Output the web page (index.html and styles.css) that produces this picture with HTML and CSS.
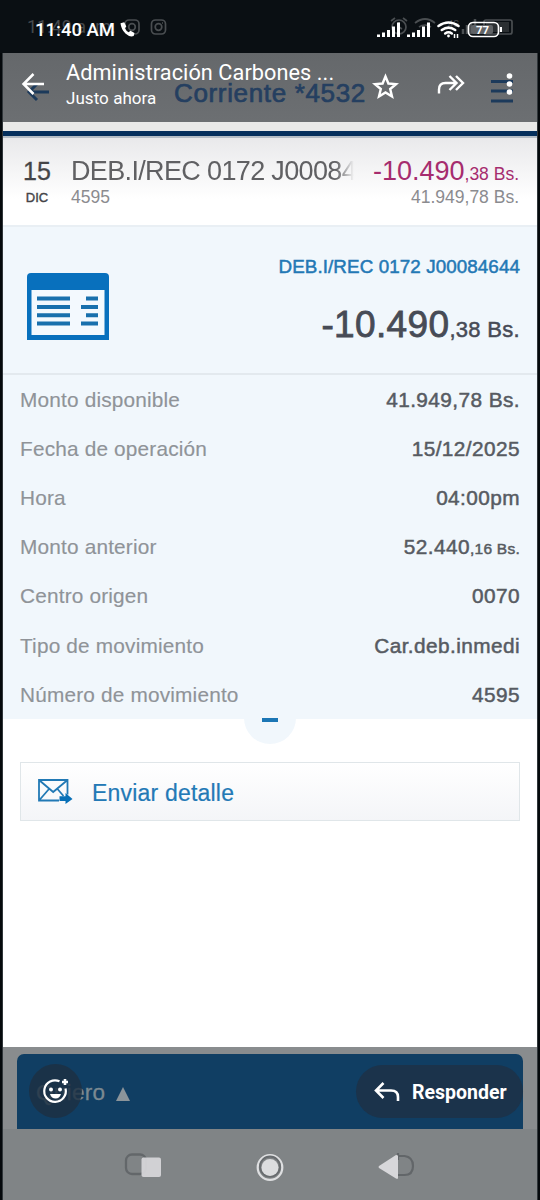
FILE: index.html
```
<!DOCTYPE html>
<html lang="es">
<head>
<meta charset="utf-8">
<title>Detalle de movimiento</title>
<link rel="stylesheet" href="styles.css">
</head>
<body>
<div class="phone">
  <header class="status">
    <svg class="status-ghost" width="540" height="53" viewBox="0 0 540 53" fill="none" stroke="#4a4e51" stroke-width="1.7">
      <text x="27" y="33" class="ghost-time">11:49 a. m.</text>
      <rect x="125" y="20" width="14" height="14" rx="4"/><circle cx="132" cy="27" r="3.3"/>
      <rect x="151.500" y="20" width="14" height="14" rx="4"/><circle cx="158.500" cy="27" r="3.3"/><path d="M162 23h1"/>
      <circle cx="399" cy="27" r="7"/><path d="M399 22v5l3 2M391 21l4-3M403 18l4 3M415 23q10-8 20 0M419 27q6-4 12 0"/>
      <text x="448" y="27" class="ghost-4g">4G</text>
      <path d="M463 34v-5M467 34v-9M471 34v-12M475 34v-15" stroke-width="2.500"/>
      <rect x="484" y="20" width="28" height="14" rx="2"/><rect x="486" y="22" width="23" height="10" fill="#2b2f32" stroke="none"/>
    </svg>
    <div class="clock">11:40 AM</div>
    <svg class="call" width="15" height="15" viewBox="0 0 15 15"><path fill="#fff" d="M.5 1.200 4.200.2 6.300 4.500 4.800 6.200q1.300 2.500 3.800 4l1.900-1.500 4 2.300-.8 3q-3.900 1.500-8.200-2.500T.5 1.200z"/></svg>
    <svg class="radios" width="130" height="24" viewBox="375 18 130 24" fill="none" stroke="#fff">
      <path stroke-width="3" d="M378.500 37v-2.500M383.500 37v-4.500M388.500 37v-7M393.500 37v-10.500M398.500 37v-14.500M408.500 37v-2.500M413.500 37v-4.500M418.500 37v-7M423.500 37v-10.500M428.500 37v-14.500"/>
      <path stroke-width="2.500" stroke-linecap="round" d="M438.500 26q10-7 20 0M441.800 30q6.700-4.700 13.400 0M445.200 33.500q3.300-2.400 6.600 0"/>
      <circle cx="448.500" cy="36" r="1.400" fill="#fff" stroke="none"/><path stroke-width="1.500" d="M454.500 34v4M457.500 34v4"/>
      <rect x="468.500" y="22.500" width="30" height="14" rx="4.500" stroke-width="1.700"/><rect x="471" y="25" width="22" height="9" rx="2" fill="#606366" stroke="none"/><path stroke-width="2" d="M501 27v5"/>
      <text x="476" y="34" class="battery">77</text>
    </svg>
  </header>

  <main class="screen">
    <div class="topbar">
      <div class="account">Corriente *4532</div>
      <svg class="ghost-nav" width="534" height="69" viewBox="3 53 534 69" fill="none" stroke="#1c3a5b" stroke-width="3"><path d="M37 84l-8 8 8 8M29 92h20M491 81.500h22M491 91h22M491 101h22"/></svg>
      <div class="viewer">
        <svg class="back" width="24" height="24" viewBox="0 0 24 24" fill="none" stroke="#fff" stroke-width="2.500"><path d="M12.500 2 2.500 12l10 10M3 12h20"/></svg>
        <div class="contact"><div class="name">Administración Carbones ...</div><div class="when">Justo ahora</div></div>
        <svg class="tools" width="145" height="30" viewBox="371 70 145 30" fill="none" stroke="#fff" stroke-width="2.400">
          <path d="M385.500 76.500l2.900 7 7.600.6-5.800 4.900 1.800 7.400-6.500-4-6.500 4 1.800-7.400-5.800-4.900 7.600-.6z"/>
          <path d="M439 93.500v-4q0-6.500 6.500-6.500H455M449.500 76l7 7-7 7M456 76l7 7-7 7"/>
          <g fill="#fff" stroke="none"><circle cx="509.500" cy="76" r="2.800"/><circle cx="509.500" cy="84" r="2.800"/><circle cx="509.500" cy="92" r="2.800"/></g>
        </svg>
      </div>
    </div>
    <div class="rule"></div>

    <section class="movement">
      <div class="date"><div class="day">15</div><div class="month">DIC</div></div>
      <div class="concept"><div class="concept-name">DEB.I/REC 0172 J00084</div><div class="ref">4595</div></div>
      <div class="sums"><div class="debit">-10.490<small>,38 Bs.</small></div><div class="balance">41.949,78 Bs.</div></div>
    </section>

    <section class="detail">
      <div class="summary">
        <svg width="83" height="67" viewBox="0 0 83 67"><path fill="#0870bd" d="M0 67V4q0-4 4-4h74q4 0 4 4v63z"/><path fill="#f3f9fe" d="M4.500 17h73v45h-73z"/><path fill="none" stroke="#1870ad" stroke-width="4" d="M10 25.500h33M10 34h33M10 42.200h33M10 50.500h33M59 25.500h12M54 34h17M59 42.200h12M54 50.500h17"/></svg>
        <div class="summary-text"><div class="title">DEB.I/REC 0172 J00084644</div><div class="amount">-10.490<small>,38 Bs.</small></div></div>
      </div>
      <dl class="facts">
        <div class="fact"><dt>Monto disponible</dt><dd>41.949,78 Bs.</dd></div>
        <div class="fact"><dt>Fecha de operación</dt><dd>15/12/2025</dd></div>
        <div class="fact"><dt>Hora</dt><dd>04:00pm</dd></div>
        <div class="fact"><dt>Monto anterior</dt><dd>52.440<small>,16 Bs.</small></dd></div>
        <div class="fact"><dt>Centro origen</dt><dd>0070</dd></div>
        <div class="fact"><dt>Tipo de movimiento</dt><dd>Car.deb.inmedi</dd></div>
        <div class="fact"><dt>Número de movimiento</dt><dd>4595</dd></div>
      </dl>
      <div class="collapse"></div>
    </section>

    <div class="send">
      <svg width="36" height="26" viewBox="0 0 36 26" fill="none" stroke="#2179b5" stroke-width="1.800"><path d="M21 21.500H1V1h28.500v14.500M1 1l14.200 12L29.500 1M1 21.500 11 10M19.500 10l6 7"/><path fill="#0870b7" stroke="none" d="M21.500 17.200h6v-3.200l7 6-7 5v-3h-6z"/></svg>
      <span>Enviar detalle</span>
    </div>

    <footer class="bottom">
      <div class="want">
        <span class="want-label">Quiero</span><span class="triangle"></span>
        <div class="react"><svg width="30" height="30" viewBox="40 1075 30 30" fill="none" stroke="#fff" stroke-width="2.200"><path d="M59.500 1080.300a10.800 10.800 0 1 0 6 7.200"/><path d="M65 1078v6M62 1081h6" stroke-width="2.600"/><path d="M50 1093h11q-1.500 4.500-5.500 4.500t-5.500-4.500z" fill="#fff" stroke="none"/><circle cx="51" cy="1088.500" r="2" fill="#fff" stroke="none"/><circle cx="60" cy="1088.500" r="2" fill="#fff" stroke="none"/></svg></div>
        <div class="reply"><svg width="26" height="22" viewBox="0 0 26 22" fill="none" stroke="#fff" stroke-width="2.600"><path d="M9.500 2 2 9.500l7.500 7.500M2.500 9.500H17q7 0 7 6.500v4"/></svg><span>Responder</span></div>
      </div>
      <svg class="keys" width="534" height="71" viewBox="3 1129 534 71" fill="none">
        <rect x="126" y="1154.500" width="20" height="19.500" rx="6" stroke="#63676a" stroke-width="2.300"/><rect x="141.500" y="1157.500" width="19.500" height="19.500" rx="2" fill="#d7d7da" fill-opacity=".93"/>
        <circle cx="270" cy="1167.500" r="12.300" stroke="#dedfe1" stroke-width="2.200"/><circle cx="270" cy="1166.500" r="10" stroke="#686c6f" stroke-width="1.800"/><circle cx="270" cy="1167.500" r="8.500" fill="#dcdddf"/>
        <path d="M397 1156h7.500q8.500 1 8.500 10t-8.500 9H397M398 1153v7" stroke="#626669" stroke-width="2.200"/><path d="M398 1156v22.500q-1 .5-2 0l-17-10.500q-1-1 0-2l17-11q2 0 2 1z" fill="#d7d7da"/>
      </svg>
    </footer>
  </main>
</div>
</body>
</html>
```
FILE: styles.css
```
* { box-sizing: border-box; }
body { margin: 0; background: #05090c; font-family: "Liberation Sans", Arial, sans-serif; white-space: nowrap; }
.phone { width: 540px; height: 1200px; display: flex; flex-direction: column; overflow: hidden; }

.status { height: 53px; position: relative; display: flex; align-items: flex-start; padding: 18px 35px 0 35px; background: #0a0f13; color: #fff; font-family: Roboto, sans-serif; }
.status-ghost { position: absolute; left: 0; top: 0; }
.ghost-time { font-size: 18px; fill: #45494c; stroke: none; }
.ghost-4g { font-size: 9px; fill: #45494c; stroke: none; }
.clock { position: relative; font-size: 18.500px; line-height: 24px; font-weight: 500; }
.call { position: relative; margin: 4px 0 0 5px; }
.radios { position: relative; margin-left: auto; }
.battery { font: 700 11.500px Roboto, sans-serif; fill: #fff; stroke: none; }

.screen { margin: 0 3px; height: 1147px; display: flex; flex-direction: column; background: #fff; box-shadow: 0 0 0 1px #30363a; clip-path: inset(0 -1px); }
.topbar { height: 69px; position: relative; background: linear-gradient(#65686b, #6c6f72); }
.account { position: absolute; left: 171px; top: 25px; font-size: 26px; line-height: 30px; letter-spacing: .65px; color: #253f60; -webkit-text-stroke: .7px #253f60; }
.ghost-nav { position: absolute; left: 0; top: 0; }
.viewer { position: relative; height: 69px; display: flex; color: #fff; font-family: Roboto, sans-serif; }
.back { margin: 19px 0 0 18px; }
.contact { margin: 7px 0 0 21px; }
.name { font-size: 21.700px; line-height: 26px; letter-spacing: .07px; }
.when { font-size: 17px; line-height: 24px; letter-spacing: .05px; }
.tools { margin: 17px 21px 0 auto; }
.rule { height: 16px; border-top: 9px solid #e9e9e8; border-bottom: 2px solid #b5bdc5; background: #06305d; }

.movement { height: 87px; display: flex; padding: 19px 18px 0 16px; background: linear-gradient(#e9e9eb, #fff 70%); }
.date { width: 36px; text-align: center; color: #444447; }
.day { font-size: 25px; line-height: 28px; -webkit-text-stroke: .3px; }
.month { font-size: 13px; line-height: 26px; -webkit-text-stroke: .4px; }
.concept { width: 283px; margin-left: 16px; }
.concept-name { font-size: 27px; line-height: 28px; letter-spacing: -.65px; color: #606063; -webkit-mask-image: linear-gradient(90deg, #000 265px, transparent 283px); mask-image: linear-gradient(90deg, #000 265px, transparent 283px); }
.ref, .balance { font-size: 17.500px; line-height: 24px; color: #8b8b8f; }
.sums { margin-left: auto; text-align: right; }
.debit { height: 28px; font-size: 27px; line-height: 28px; color: #a62c6e; }
.debit small { font-size: 17.500px; line-height: 1; }

.detail { height: 494px; position: relative; background: #f1f7fc; border-top: 2px solid #e9eff4; }
.summary { height: 148px; display: flex; justify-content: space-between; padding: 46px 17px 0 24px; border-bottom: 2px solid #e3e9ee; }
.summary-text { margin-top: -18px; text-align: right; }
.title { font-size: 18.800px; line-height: 24px; letter-spacing: .1px; color: #2378b5; -webkit-text-stroke: .5px; }
.amount { margin-top: 24px; font-size: 37px; line-height: 44px; letter-spacing: .35px; color: #474b56; -webkit-text-stroke: .8px; }
.amount small { font-size: 22px; letter-spacing: .3px; -webkit-text-stroke: .5px; }
.facts { margin: 0; padding: 0 17px; }
.fact { height: 49.200px; display: flex; align-items: center; justify-content: space-between; font-size: 20.800px; }
.fact dt { color: #8f9398; letter-spacing: .18px; -webkit-text-stroke: .15px; }
.fact dd { margin: 0; color: #575b62; letter-spacing: .42px; -webkit-text-stroke: .5px; }
.fact small { font-size: 15.500px; letter-spacing: .25px; }
.collapse { position: absolute; left: 241px; bottom: -25px; width: 52px; height: 52px; border-radius: 50%; background: #f1f7fc; }
.collapse::after { content: ""; display: block; width: 16px; height: 4px; margin: 26px auto 0; background: #1c76b5; }

.send { height: 59px; margin: 43px 17px 0; display: flex; align-items: center; padding-left: 17px; border: 1px solid #e0e6e9; background: linear-gradient(#fff, #f4f5f8); }
.send span { margin: 3px 0 0 18px; font-size: 23px; letter-spacing: .2px; color: #2379b6; -webkit-text-stroke: .2px; }

.bottom { height: 153px; margin-top: auto; padding-top: 7px; background: linear-gradient(#898c8e 82px, #808486 82px); }
.want { height: 75px; position: relative; display: flex; align-items: center; margin: 0 14px; padding-left: 19px; border-radius: 7px 7px 0 0; background: #103e63; color: #7b8991; }
.want-label { padding-top: 3px; font-size: 22.500px; letter-spacing: .3px; -webkit-text-stroke: .3px; }
.triangle { margin: 5px 0 0 11px; border: 7px solid transparent; border-top: 0; border-bottom: 14px solid #8b949a; }
.react { position: absolute; left: 12px; top: 10px; width: 53px; height: 54px; border-radius: 50%; padding: 12px 11px; background: rgba(29, 47, 66, .82); }
.reply { position: absolute; right: 0; top: 11px; width: 167px; height: 53px; border-radius: 27px; display: flex; align-items: center; padding-left: 18px; background: #1b334b; color: #fff; font: 700 19.500px Roboto, sans-serif; }
.reply span { margin: 2px 0 0 12px; }
.keys { display: block; }
```
